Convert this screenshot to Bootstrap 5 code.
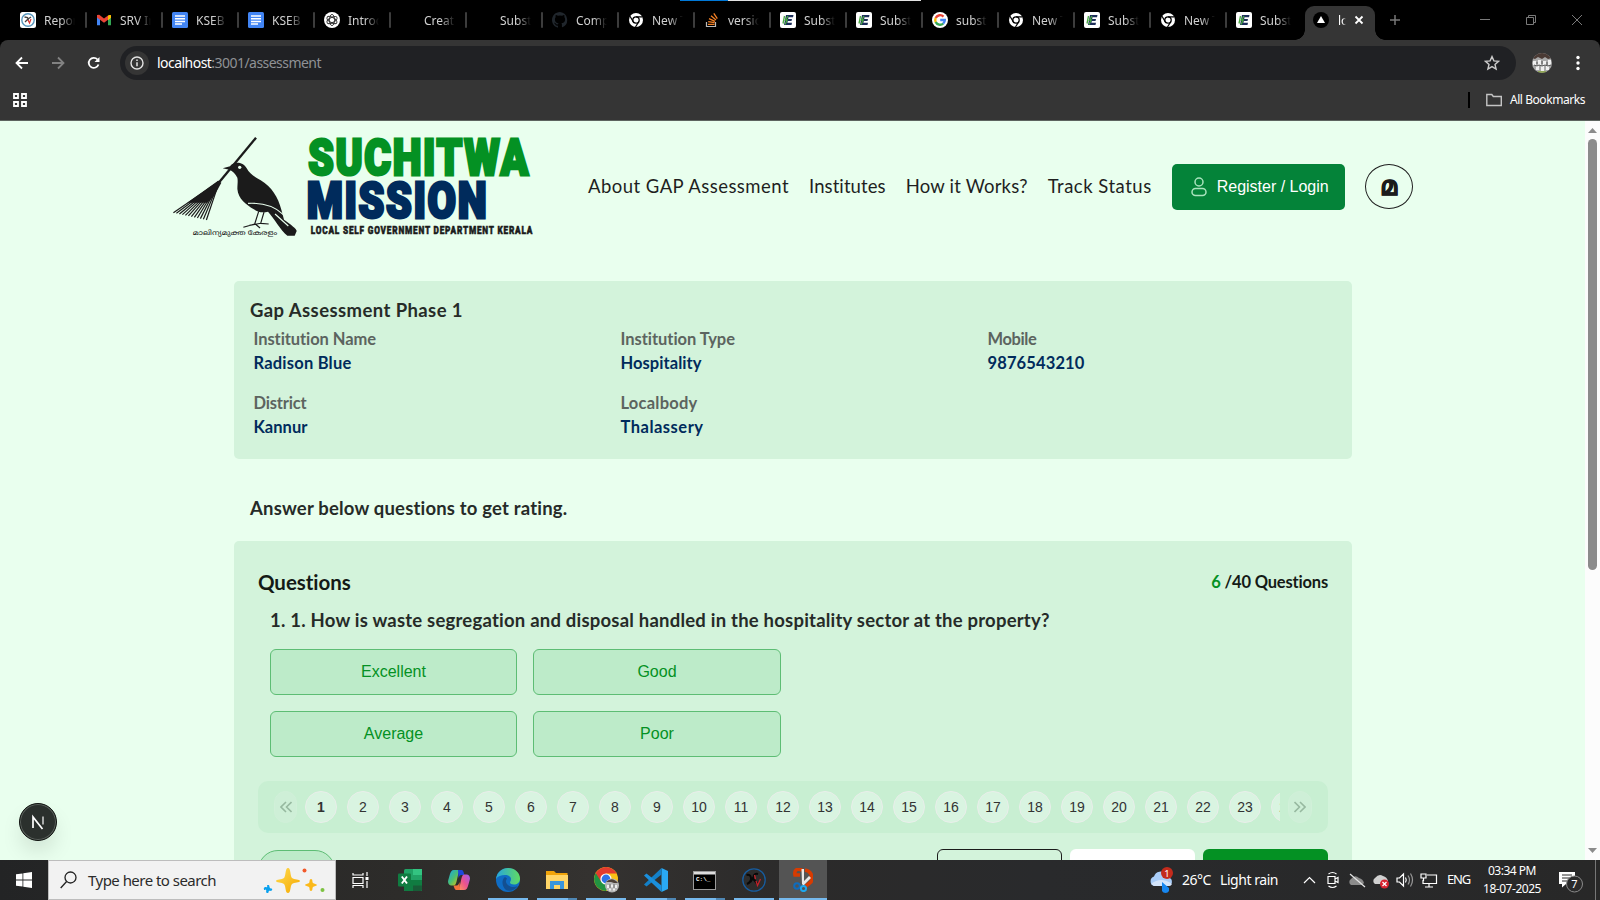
<!DOCTYPE html>
<html lang="en">
<head>
<meta charset="utf-8">
<title>Gap Assessment</title>
<link rel="stylesheet" href="https://cdn.jsdelivr.net/npm/bootstrap@5.3.0/dist/css/bootstrap.min.css">
<style>
html,body{width:1600px;height:900px;overflow:hidden;background:#000}
body{font-family:"Noto Sans","Open Sans",sans-serif;color:#222;line-height:1.2}
svg{display:block;flex:none}
span,div{white-space:nowrap}
.tabstrip{height:40px;background:#000;padding-left:11px;position:relative}
.topline{position:absolute;left:680px;top:0;width:241px;height:1px;background:linear-gradient(90deg,#0078d7 48px,#e3e3e3 48px)}
.btab{width:76px;height:40px;padding-left:9px;flex:none;position:relative}
.btab::after{content:"";width:2px;height:16px;background:#3c3c3c;position:absolute;right:0;top:12px;border-radius:1px}
.btab.nosep::after{display:none}
.btab .fav{width:16px;height:16px;margin-right:8px;flex:none}
.ttl{font:12px/16px "Noto Sans",sans-serif;color:#d0d0d0;width:31px;overflow:hidden;padding-top:1px;-webkit-mask-image:linear-gradient(90deg,#000 55%,transparent)}
.live{width:70px;height:34px;background:#353535;border-radius:9px 9px 0 0;align-self:flex-end;margin-left:2px;padding:0 0 6px 8px;position:relative;flex:none}
.live::before,.live::after{content:"";position:absolute;bottom:0;width:10px;height:10px}
.live::before{left:-10px;background:radial-gradient(circle at 0 0,transparent 9.5px,#353535 10px)}
.live::after{right:-10px;background:radial-gradient(circle at 100% 0,transparent 9.5px,#353535 10px)}
.toolbox{height:81px;background:#353535;border-radius:8px 8px 0 0;border-bottom:1px solid #5d645f}
.addr{height:46px;padding-left:14px}
.omni{width:1396px;height:34px;border-radius:17px;background:#202124;margin-left:18px;padding-left:5px}
.infoc{width:24px;height:24px;border-radius:50%;background:#353535}
.url{font-size:14px;color:#8f9195;margin-left:8px;padding-top:1px}
.marks{height:34px;padding:0 15px 0 13px;font-size:12px;color:#fff}
.pageview{height:739px}
.site{width:1585px;height:739px;overflow:hidden;background:#e9ffee;position:relative;font-family:Lato,sans-serif}
.head{height:131px;padding-left:170px}
.navtxt{font-size:18.5px;line-height:24px;color:#1f1f1f}
.navtxt>span{padding-bottom:1px}
.login{width:173px;height:46px;background:#048339;border-radius:5px;color:#fff;font:16px/44px "Liberation Sans",sans-serif;padding-left:18px}
.lang{width:48px;height:45px;border:1.5px solid #1f1f1f;border-radius:50%;font-weight:700;font-size:27px;line-height:1;padding-bottom:4px;color:#1c1c1c;-webkit-text-stroke:.6px #1c1c1c}
.panel{width:1118px;margin-left:234px;background:#d3f3db;border-radius:5px}
.info{height:178px;margin-top:29px;padding:17px 16px 15px}
.h18{font-size:18.5px;line-height:24px;font-weight:700;color:#262b28}
.fields{display:grid;grid-template-columns:367px 367px 1fr;row-gap:16px;margin:5px 0 0 3.500px;font-weight:700;font-size:16.5px;line-height:24px}
.fields .k{color:#5c645f}.fields .v{color:#002b5c}
.ask{margin:37px 0 21px 250px}
.quiz{height:340px;padding:26px 24px 0 24px}
.qt{font-size:20.5px;line-height:30px;font-weight:700;color:#141a16}
.opts{display:grid;grid-template-columns:247px 248px;gap:16px;margin:17px 0 0 12px}
.opt{height:46px;border:1px solid #5dbd74;border-radius:6px;background:#bdebc9;color:#049123;font:16px/43px "Liberation Sans",sans-serif;text-align:center}
.pager{height:52px;background:#c8efd2;border-radius:10px;margin-top:24px;padding:10px 16px;font:14px/30px "Liberation Sans",sans-serif}
.run{width:975px;overflow:hidden;gap:10px;margin-left:8px}
.num{width:32px;height:32px;flex:none;border-radius:50%;border:1px solid #e9eeea;background:#d9f4e1;color:#333;text-align:center}
.step{height:32px;border-radius:12px;background:#ceefd7;border:1px solid #d1f0d9}
.acts{margin-top:16px;gap:8px}
.acts>div{width:125px;height:46px;border-radius:6px}
.prev{width:77px!important;height:40px!important;border-radius:22px!important;border:1px solid #5dbd74;background:#bdebc9;margin:1px auto 0 0}
.dev{position:absolute;left:19px;top:682px;width:38px;height:38px;border-radius:50%;background:#2b302d;border:1px solid #101310;box-shadow:inset 0 0 0 1px #5b615d,0 12px 24px -6px #0003}
.sbar{width:15px;height:739px;background:#fcfcfc;padding:7px 0}
.thumb{width:9px;height:431px;border-radius:5px;background:#8b8b8b;margin:5px auto 0 3px}
.task{height:40px;background:linear-gradient(90deg,#232425,#2d2c2a 25%,#343230 37%,#2b2a2a 50%,#292a2c 65%,#282828);color:#fff}
.startb{width:48px}
.find{width:288px;height:40px;background:#f2f2f2;border:1px solid #bdbdbd;color:#2b2b2b;font-size:15px;padding:0 10px 0 11px}
.app{height:40px;width:49.2px;position:relative}
.app.on::after{content:"";position:absolute;left:4.5px;bottom:0;width:40px;height:2px;background:#76b9ed}
.app.two::after{background:linear-gradient(90deg,#76b9ed 31px,#4f87b4 31px)}
.app.cur{background:#545454}.app.cur::after{left:0;width:48px}
.tray{font-size:14px;margin-left:auto}
.clock{font-size:12px;line-height:18px;width:62px;text-align:center}
</style>
</head>
<body>
<svg width="0" height="0" class="position-absolute">
<defs>
<symbol id="f-rep" viewBox="0 0 16 16"><rect width="16" height="16" rx="2.5" fill="#fff"/><circle cx="8" cy="8" r="6.2" fill="none" stroke="#5796bd" stroke-width="1.4"/><path d="M4.5 5l3 .5 1 3M5 10l3-3 3-2" stroke="#444" stroke-width="1.3" fill="none"/><path d="M8 8l1.5 3 1.5-4" stroke="#d33" stroke-width="1.2" fill="none"/></symbol>
<symbol id="f-gm" viewBox="0 0 16 16"><path d="M1 4v9.2h3V7z" fill="#4285f4"/><path d="M15 4v9.2h-3V7z" fill="#34a853"/><path d="M12 3.7L15 3v2.6l-3 2.3z" fill="#fbbc04"/><path d="M1 3l2.2-.2L8 6.600 12 3.600V7.800l-4 3-4-3-3-2.300z" fill="#ea4335"/><path d="M12 3.700c1-1 3-1 3 .8v1.200l-3 2.200z" fill="#fbbc04"/></symbol>
<symbol id="f-doc" viewBox="0 0 16 16"><rect width="16" height="16" rx="1.500" fill="#4285f4"/><path d="M3 4h10M3 6.700h10M3 9.400h10M3 12.100h7" stroke="#fff" stroke-width="1.500"/></symbol>
<symbol id="f-gpt" viewBox="0 0 16 16"><circle cx="8" cy="8" r="8" fill="#fff"/><g fill="none" stroke="#333" stroke-width=".9"><ellipse cx="8" cy="8" rx="2.600" ry="5.600"/><ellipse cx="8" cy="8" rx="2.600" ry="5.600" transform="rotate(60 8 8)"/><ellipse cx="8" cy="8" rx="2.600" ry="5.600" transform="rotate(120 8 8)"/></g></symbol>
<symbol id="f-gh" viewBox="0 0 16 16"><path fill="#20262c" d="M8 0C3.580 0 0 3.580 0 8c0 3.540 2.290 6.530 5.470 7.590.4.070.55-.17.55-.38v-1.500c-2 .4-2.500-.6-2.700-1.100-.1-.3-.5-1-.8-1.200-.3-.2-.7-.6 0-.6s1.100.6 1.200.8c.7 1.200 1.900.9 2.300.7.100-.5.300-.9.500-1.100-1.800-.2-3.600-.9-3.600-4 0-.9.300-1.600.8-2.100-.1-.2-.4-1 .1-2.100 0 0 .7-.2 2.200.8a7.600 7.600 0 0 1 4 0c1.500-1 2.200-.8 2.200-.8.4 1.100.2 1.900.1 2.100.5.600.8 1.300.8 2.100 0 3.100-1.900 3.700-3.700 3.900.3.300.5.800.5 1.500v2.200c0 .2.200.5.600.4A8 8 0 0 0 8 0z"/></symbol>
<symbol id="f-cr" viewBox="0 0 16 16"><circle cx="8" cy="8" r="7" fill="#fff"/><circle cx="8" cy="8" r="3.200" fill="none" stroke="#000" stroke-width="1.300"/><path d="M8 4.800h6.500M5.200 9.600L2 4.300M10.800 9.600L7.500 15" stroke="#000" stroke-width="1.200"/></symbol>
<symbol id="f-so" viewBox="0 0 16 16"><path d="M2.500 10v4.500h9V10" fill="none" stroke="#bbb" stroke-width="1.200"/><path d="M4 12.300h6.500M4.200 9.600l6.400 1M5 6.700l6 2.700M7 3.800l5 4.200M9.800 1.300l3.500 5.400" stroke="#f48024" stroke-width="1.300"/></symbol>
<symbol id="f-e" viewBox="0 0 16 16"><rect width="16" height="16" rx="2" fill="#fff"/><path d="M6 3h7.500l-.5 2.200H8.500L8.200 7H12l-.5 2H7.800l-.4 1.800H12l-.5 2.200H4z" fill="#1d2f5a"/><path d="M4.500 4L3 11.500M8 4L5.500 8h1.700L5 12.500" stroke="#49a942" stroke-width="1.300" fill="none"/></symbol>
<symbol id="f-g" viewBox="0 0 16 16"><circle cx="8" cy="8" r="8" fill="#fff"/><g fill="none" stroke-width="2.400"><path d="M11.500 4.600A4.800 4.800 0 0 0 3.700 6" stroke="#ea4335"/><path d="M3.700 5.900a4.800 4.800 0 0 0 0 4.200" stroke="#fbbc04"/><path d="M3.700 10a4.800 4.800 0 0 0 7.500 1.600" stroke="#34a853"/><path d="M11.200 11.600A4.800 4.800 0 0 0 12.800 8H8.200" stroke="#4285f4"/></g></symbol>
</defs>
</svg>

<div class="tabstrip d-flex align-items-center" id="tabs"><div class="topline"></div>
<div class="live d-flex align-items-center"><svg width="16" height="16" viewBox="0 0 16 16"><circle cx="8" cy="8" r="8"/><path d="M8 4l4 7H4z" fill="#fff"/></svg><span class="ttl" style="width:8px;color:#fff;margin-left:9px">lo</span><svg style="margin-left:6px" width="14" height="14" viewBox="0 0 14 14"><path d="M3.500 3.500l7 7m0-7l-7 7" stroke="#fff" stroke-width="1.800"/></svg></div>
<svg style="margin-left:14px" width="12" height="12" viewBox="0 0 12 12"><path d="M6 1v10M1 6h10" stroke="#777" stroke-width="1.500"/></svg>
<svg style="margin-left:78px" width="110" height="14" viewBox="0 0 110 14" fill="none" stroke="#7a7a7a"><path d="M1 6.500h10M47.500 4.500h7v7h-7zM49.500 4.500v-2h7v7h-2M93 2l10 10m0-10L93 12"/></svg>
</div>

<div class="toolbox">
 <div class="addr d-flex align-items-center">
  <svg width="88" height="16" viewBox="0 0 88 16" fill="none" stroke-width="1.800"><path d="M14 8H3M8 2.500L2.500 8 8 13.500" stroke="#fff"/><path d="M38 8h11M44 2.500L49.500 8 44 13.500" stroke="#828282"/><path d="M84.500 9.500A5 5 0 1 1 83.500 4.500" stroke="#fff"/><path d="M85.500 2v5h-5z" fill="#fff"/></svg>
  <div class="omni d-flex align-items-center">
   <div class="infoc d-flex align-items-center justify-content-center"><svg width="14" height="14" viewBox="0 0 14 14"><circle cx="7" cy="7" r="6" fill="none" stroke="#e3e3e3" stroke-width="1.400"/><path d="M7 6.200v4M7 3.500v1.500" stroke="#e3e3e3" stroke-width="1.500"/></svg></div>
   <div class="url" data-w="164"><span class="text-white">localhost</span>:3001/assessment</div>
   <svg class="ms-auto" style="margin-right:16px" width="16" height="16" viewBox="0 0 16 16"><path d="M8 1.600l1.900 4.300 4.600.4-3.500 3.100 1.100 4.600L8 11.600 3.900 14 5 9.400 1.500 6.300l4.600-.4z" fill="none" stroke="#ccc" stroke-width="1.400"/></svg>
  </div>
  <svg style="margin-left:16px" width="20" height="20" viewBox="0 0 20 20"><defs><clipPath id="av"><circle cx="10" cy="10" r="10"/></clipPath></defs><g clip-path="url(#av)"><path d="M0 0h20v20H0z" fill="#a9a9a9"/><path d="M0 0h20v5l-4 1-3-2-3 2-4-2-3 2-3-1z" fill="#4a3a34"/><path d="M1 8h3v4H1zM6 7h3v5H6zM11 8h3v4h-3zM16 7h3v5h-3zM4 13h3v4H4zM9 13h3v5H9zM14 13h3v4h-3z" fill="#efefef"/><path d="M2 12l3 1 2-1 3 1 3-1 3 1 3-1M5 9v2M10 8v3M15 9v3" stroke="#5a5a5a" fill="none"/><path d="M6 19h8" stroke="#8aa63c" stroke-width="1.500"/></g></svg>
  <svg style="margin-left:24px" width="4" height="16" viewBox="0 0 4 16" fill="#fff"><circle cx="2" cy="2.500" r="1.700"/><circle cx="2" cy="8" r="1.700"/><circle cx="2" cy="13.500" r="1.700"/></svg>
 </div>
 <div class="marks d-flex align-items-center" style="padding-bottom:6px">
  <svg width="14" height="14" viewBox="0 0 14 14" fill="none" stroke="#fff" stroke-width="1.800"><path d="M1 1h4v4H1zM9 1h4v4H9zM1 9h4v4H1zM9 9h4v4H9z"/></svg>
  <div class="ms-auto bg-black" style="width:2px;height:16px"></div>
  <svg style="margin-left:16px;margin-right:8px" width="16" height="14" viewBox="0 0 16 14"><path d="M.8 1.500h5l1.500 2h8v9H.8z" fill="none" stroke="#c4c4c4" stroke-width="1.400"/></svg>
  <span data-w="75">All Bookmarks</span>
 </div>
</div>

<div class="pageview d-flex">
 <div class="site">
  <div class="head d-flex align-items-center">
   <svg width="365" height="103.300" viewBox="30 45 1095 310">
    <g stroke="#1b1b1b" fill="none"><path d="M288 53L178 186" stroke-width="7"/><g stroke-width="3.600" id="bristles"></g></g>
    <path d="M174 182l10 6-22 40-20 20-60 0z" fill="#1b1b1b"/>
    <path d="M188 145l22-6c8-14 38-16 50 6 8 16 22 24 42 36 34 20 52 52 62 88l8 30c20 14 38 28 38 34l-6 14-22 0c-20-16-40-52-58-72-16 4-30 2-44-8-20-12-46-30-48-60 0-14 2-24 0-34-6-12-14-20-24-24z" fill="#1b1b1b"/>
    <path d="M264 250c40-2 80 8 106 34 14 16 26 28 38 36M345 282l40 36" stroke="#e9ffee" stroke-width="3.500" fill="none"/><circle cx="239" cy="142" r="5" fill="#e9ffee"/>
    <path d="M296 274l-12 38-34 10m36-10l14 12M312 276l-10 34-34 6m34-6l24 2" fill="none" stroke="#1b1b1b" stroke-width="3.500"/>
    <text x="98" y="344" font-size="22" textLength="254" lengthAdjust="spacingAndGlyphs" fill="#1b1b1b" font-family="Noto Sans,Noto Sans Malayalam,sans-serif">മാലിന്യമുക്ത കേരളം</text>
    <g font-family="Roboto,Liberation Sans,sans-serif" font-weight="900" stroke-linejoin="miter">
    <text x="445" y="164" font-size="152" textLength="665" lengthAdjust="spacingAndGlyphs" fill="#049123" stroke="#049123" stroke-width="9" letter-spacing="6">SUCHITWA</text>
    <text x="440" y="294" font-size="152" textLength="545" lengthAdjust="spacingAndGlyphs" fill="#002b5c" stroke="#002b5c" stroke-width="9" letter-spacing="6">MISSION</text>
    <text x="452" y="341.500" font-size="31" textLength="668" lengthAdjust="spacingAndGlyphs" fill="#1b1b1b" stroke="#1b1b1b" stroke-width="1.500" letter-spacing="3">LOCAL SELF GOVERNMENT DEPARTMENT KERALA</text></g>
   </svg>
   <div class="d-flex align-items-center navtxt" style="margin-left:53px;gap:20px">
    <span data-w="201">About GAP Assessment</span><span data-w="77">Institutes</span><span data-w="122">How it Works?</span><span data-w="104">Track Status</span>
    <div class="login d-flex align-items-center"><svg width="18" height="20" viewBox="0 0 18 20" fill="none" stroke="#a9e3bd" stroke-width="1.500"><circle cx="9" cy="5" r="4"/><rect x="2" y="11.500" width="14" height="7" rx="3.500"/></svg><span style="margin-left:9px" data-w="112">Register / Login</span></div>
    <div class="lang d-flex align-items-center justify-content-center">മ</div>
   </div>
  </div>

  <div class="panel info">
   <div class="h18"><span data-w="213">Gap Assessment Phase 1</span></div>
   <div class="fields">
    <div><div class="k"><span data-w="123">Institution Name</span></div><div class="v"><span data-w="98">Radison Blue</span></div></div>
    <div><div class="k"><span data-w="115">Institution Type</span></div><div class="v"><span data-w="81">Hospitality</span></div></div>
    <div><div class="k"><span data-w="49">Mobile</span></div><div class="v"><span data-w="97">9876543210</span></div></div>
    <div><div class="k"><span data-w="53">District</span></div><div class="v"><span data-w="54">Kannur</span></div></div>
    <div><div class="k"><span data-w="77">Localbody</span></div><div class="v"><span data-w="83">Thalassery</span></div></div>
   </div>
  </div>
  <div class="h18 ask"><span data-w="318">Answer below questions to get rating.</span></div>
  <div class="panel quiz">
   <div class="d-flex align-items-center justify-content-between qt"><span data-w="93">Questions</span><span style="font-size:16.5px" data-w="117"><span style="color:#049123">6</span> /40 Questions</span></div>
   <div class="h18" style="margin:11px 0 0 12px"><span data-w="780">1. 1. How is waste segregation and disposal handled in the hospitality sector at the property?</span></div>
   <div class="opts"><div class="opt">Excellent</div><div class="opt">Good</div><div class="opt">Average</div><div class="opt">Poor</div></div>
   <div class="pager d-flex">
    <div class="step d-flex align-items-center justify-content-center" style="width:23px"><svg width="12" height="12" viewBox="0 0 12 12" fill="none" stroke="#97b9a0" stroke-width="1.600"><path d="M6 1L1 6l5 5M11.500 1l-5 5 5 5"/></svg></div>
    <div class="run d-flex" id="run"></div>
    <div class="step d-flex align-items-center justify-content-center" style="width:24px;margin-left:8px"><svg width="12" height="12" viewBox="0 0 12 12" fill="none" stroke="#97b9a0" stroke-width="1.600"><path d="M.5 1l5 5-5 5M6 1l5 5-5 5"/></svg></div>
   </div>
   <div class="acts d-flex"><div class="prev"></div><div style="border:1px solid #1b1b1b"></div><div class="bg-white"></div><div style="background:#049123"></div></div>
  </div>
  <div class="dev d-flex align-items-center justify-content-center"><svg width="14" height="16" viewBox="0 0 14 16" fill="none" stroke="#fff" stroke-width="1.700"><path d="M2 14V3l9.500 12"/><path d="M12 2.500v8" stroke-opacity=".7"/></svg></div>
 </div>
 <div class="sbar d-flex flex-column">
  <svg class="ms-auto me-auto" width="9" height="5" viewBox="0 0 9 5"><path d="M4.500 0L9 5H0z" fill="#8b8b8b"/></svg>
  <div class="thumb flex-shrink-0" style="margin-top:6px"></div>
  <svg class="mt-auto ms-auto me-auto" width="9" height="5" viewBox="0 0 9 5"><path d="M4.500 5L9 0H0z" fill="#8b8b8b"/></svg>
 </div>
</div>

<div class="task d-flex align-items-center">
 <div class="startb d-flex justify-content-center"><svg width="16" height="16" viewBox="0 0 16 16" fill="#fff"><path d="M0 2.300l6.500-.9v6.200H0zM7.300 1.300L16 0v7.600H7.300zM0 8.400h6.500v6.200L0 13.700zM7.300 8.400H16V16l-8.700-1.200z"/></svg></div>
 <div class="find d-flex align-items-center"><svg width="17" height="18" viewBox="0 0 17 18" fill="none" stroke="#222" stroke-width="1.300"><circle cx="10.500" cy="6.500" r="5.500"/><path d="M6.600 10.500L.7 17"/></svg><span style="margin-left:11px" data-w="128">Type here to search</span>
 <svg class="ms-auto" width="62" height="26" viewBox="0 0 62 26"><defs><linearGradient id="au" x2="1" y2="1"><stop stop-color="#ffdc50"/><stop offset="1" stop-color="#f5a800"/></linearGradient></defs><path d="M25 1c3 0 2 8 4 10s8 1 8 3-6 1-8 3-1 9-4 9-2-7-4-9-8-1-8-3 6-1 8-3 1-10 4-10z" fill="url(#au)"/><path d="M48 12c2 0 1 3 2 4s4 1 4 2-3 1-4 2 0 4-2 4-1-3-2-4-4-1-4-2 3-1 4-2 0-4 2-4z" fill="#fbb91a"/><path d="M5 18c2 0 1 2 2 3s3 0 2 2-2 0-3 1 0 3-2 2 0-2-1-3-3 0-2-2 2 0 3-1-1-2 1-2z" fill="#0aa1ee"/><circle cx="41.500" cy="3.500" r="2" fill="#f2592a"/><circle cx="59.500" cy="23" r="2" fill="#7dc242"/></svg></div>
 <div class="app d-flex align-items-center justify-content-center"><svg style="margin-right:1px" width="17" height="16" viewBox="0 0 17 16" fill="none" stroke="#fff" stroke-width="1.200"><path d="M1 1v2h10V1M1 16v-2.500h10V16M1 5.500h10v6H1zM15 0v4M15 9v7"/><path d="M15 5v3" stroke-width="3"/></svg></div>
 <div class="app d-flex align-items-center justify-content-center"><svg width="24" height="22" viewBox="0 0 24 22"><rect x="6" width="18" height="22" rx="1.500" fill="#21a366"/><path d="M15 0h9v6h-9z" fill="#33c481"/><path d="M6 11h18v10l-1 1H7l-1-1z" fill="#107c41"/><path d="M15 16.500h9V21l-1 1h-8z" fill="#185c37"/><rect y="4.500" width="13" height="13" rx="1" fill="#107c41"/><path d="M3.800 7.500l5.200 7m0-7l-5.200 7" stroke="#fff" stroke-width="1.900"/></svg></div>
 <div class="app d-flex align-items-center justify-content-center"><svg width="22" height="22" viewBox="0 0 22 22"><defs><linearGradient id="c1" y2="1"><stop stop-color="#16a6ea"/><stop offset=".5" stop-color="#4bbf72"/><stop offset="1" stop-color="#f7c400"/></linearGradient><linearGradient id="c2" x1="1" x2="0" y2="1"><stop stop-color="#9b5df5"/><stop offset=".5" stop-color="#ec528d"/><stop offset="1" stop-color="#fd9a5c"/></linearGradient></defs><path d="M12 1H6C3.500 1 2.500 3 1.700 6L.3 11c-1 3.500 1 5.500 3 5.500h2.200c2 0 2.500-2 3.200-4.500L10 6c.6-2 1-3 2-5z" fill="url(#c1)"/><path d="M10 1h3c2.500 0 2.500 2 3.500 5h-3c-2 0-2 1-3 3z" fill="#1b47dc"/><path d="M10 21h6c2.500 0 3.500-2 4.300-5l1.400-5c1-3.500-1-5.500-3-5.500h-2.200c-2 0-2.500 2-3.200 4.500L12 16c-.6 2-1 3-2 5z" fill="url(#c2)"/><path d="M12 21H9c-2.500 0-2.500-2-3.500-4.500h3c2 0 2-1.500 3-3.500z" fill="#f4723c"/></svg></div>
 <div class="app on d-flex align-items-center justify-content-center"><svg width="24" height="24" viewBox="0 0 24 24"><defs><linearGradient id="e1"><stop stop-color="#26a5de"/><stop offset="1" stop-color="#61db61"/></linearGradient></defs><circle cx="12" cy="12" r="12" fill="#0f6cc4"/><path d="M0 11C1 4 6 0 12 0c7 0 12 5 12 10.500 0 4-3 6-6 6-2.500 0-4-1-4-2s1-1.500 1-3.500S13 7 9 7c-4 0-7 1-9 4z" fill="url(#e1)"/><path d="M9 9c-4 3-3 10 1 13 4 2 9 0 12-4-4 2-8 1-10-1-2-1.500-3-4-1-6.500z" fill="#134f91"/></svg></div>
 <div class="app on two d-flex align-items-center justify-content-center"><svg width="22" height="18" viewBox="0 0 22 18"><path d="M0 0h8l2 2h11.500v16H0z" fill="#f0a30a"/><path d="M0 4h22v14H0z" fill="#ffd567"/><path d="M4 18v-8h14v8h-4v-4H8v4z" fill="#3a96dd"/></svg></div>
 <div class="app on d-flex align-items-center justify-content-center"><svg width="26" height="26" viewBox="0 0 26 26"><circle cx="12" cy="12" r="12" fill="#fbc116"/><path d="M12 12L1.700 6A12 12 0 0 0 12 24l4-7z" fill="#229342"/><path d="M12 6.500h10.800L22.400 6A12 12 0 0 0 1.700 6l5 8z" fill="#e33b2e"/><circle cx="12" cy="12" r="5.600" fill="#fff"/><circle cx="12" cy="12" r="4.400" fill="#2f73e8"/><circle cx="18" cy="18.500" r="7" fill="#b5b5b5"/><path d="M12 15q6-6 12 1l-4 0-3-1z" fill="#4c4038"/><path d="M13 18h2v3h-2zM17 17.500h2v3h-2zM21 18h2v3h-2zM15 21.500h2v2h-2zM19 21.500h2v2h-2z" fill="#eee"/><path d="M16 17v4M20 17v4" stroke="#777" fill="none"/></svg></div>
 <div class="app on two d-flex align-items-center justify-content-center"><svg width="24" height="24" viewBox="0 0 24 24"><path d="M17.500 0L24 3v18l-6.500 3z" fill="#2aa9f3"/><path d="M17.500 6.500L2.500 18.500 0 16.500 17.500 0z" fill="#1380c8"/><path d="M17.500 17.500L2.500 5.500 0 7.500 17.500 24z" fill="#1a8fdc"/></svg></div>
 <div class="app on two d-flex align-items-center justify-content-center"><svg width="23" height="19" viewBox="0 0 23 19"><rect x=".5" y=".5" width="22" height="18" fill="#000" stroke="#9b9b9b"/><path d="M1 1h21v2.500H1z" fill="#dedede"/><text x="3" y="10" font-size="6" font-weight="700" fill="#fff" font-family="Liberation Mono,monospace">C:\_</text></svg></div>
 <div class="app on d-flex align-items-center justify-content-center"><svg width="24" height="24" viewBox="0 0 24 24" fill="none"><circle cx="12" cy="12" r="11.200" stroke="#175c9e" stroke-width="1.300"/><path d="M4.500 7q4-1 4.500 3t-4 6M16 6q-4-1-4.500 3l-3 5M10.500 10l5 6" stroke="#080808" stroke-width="2"/><path d="M12.500 7l1 4M14 13l1.500 4.500L18.500 11" stroke="#c3222a" stroke-width="1.300"/></svg></div>
 <div class="app on cur d-flex align-items-center justify-content-center" style="width:48px"><svg width="20" height="24" viewBox="0 0 20 24"><path d="M9 2C4 0 1 2 2 7h5M12 2c6 1 8 6 6 12l-5 4" fill="none" stroke="#d83b01" stroke-width="3.600"/><path d="M8.500 1h2.500v14l-2 1zM16 8l2 2-8 8-1-3z" fill="#e8e8e8"/><circle cx="4" cy="18" r="2.800" fill="none" stroke="#0f6cbd" stroke-width="2"/><circle cx="10.500" cy="20.500" r="2.600" fill="none" stroke="#1ea7ee" stroke-width="2"/></svg></div>
 <div class="tray d-flex align-items-center">
  <svg width="25" height="26" viewBox="0 0 25 26"><path d="M5 19a5 5 0 0 1 0-9.500 7 7 0 0 1 12-2.500l4 4a4.500 4.500 0 0 1-1 8z" fill="#a9cdf8"/><path d="M2 17q10-8 21 0a4 4 0 0 1-3 2H5z" fill="#d4e5fb"/><path d="M13 15l7 6v3q-1 2-3.500 2T13 24z" fill="#1787f0"/><circle cx="18" cy="6" r="6" fill="#c42b1c"/><text x="18" y="9.500" font-size="9.500" fill="#fff" text-anchor="middle">1</text></svg>
  <span style="margin-left:8px" data-w="29">26°C</span><span style="margin-left:9px" data-w="58">Light rain</span>
  <svg style="margin-left:24px" width="136" height="20" viewBox="0 0 136 20" fill="none" stroke="#fff" stroke-width="1.200"><path d="M2 13l5.500-5.500L13 13"/><path d="M26 6.500h7v7h-7zM33 9l3-1.500v5L33 11M26.500 4q4-3 8 0M26.500 16q4 3 8 0"/><path d="M49 15a3.500 3.500 0 0 1 0-6q4-5 8-1 4 1 5 5l-2 2z" fill="#8b8b8b" stroke="none"/><path d="M48 4l15 13" stroke="#e5e5e5"/><path d="M73 14a3.500 3.500 0 0 1 0-6q4-5 8-2 4 1 5 5l-2 3z" fill="#d0d0d0" stroke="none"/><circle cx="82.500" cy="14" r="4.500" fill="#d8232f" stroke="none"/><path d="M80.500 12l4 4m0-4l-4 4"/><path d="M95 8h2.500l4-4v12l-4-4H95zM103.500 7.500q1.500 2.500 0 5"/><path d="M106 5.500q3 4.500 0 9M108.500 3.500q4 6.500 0 13" stroke="#999"/><path d="M125 5h9.500v8.500H121V10M127 13.500V17M123 17h8M119 4h5v4h-5zM121.500 8v3"/></svg>
  <span style="margin-left:9px;font-size:13px" data-w="23">ENG</span>
  <div class="clock" style="margin-left:11px"><span data-w="48">03:34 PM</span><br><span data-w="58">18-07-2025</span></div>
  <svg style="margin-left:16px" width="26" height="26" viewBox="0 0 26 26"><path d="M0 5h16v12H7l-4 3.500V17H0z" fill="#fff"/><path d="M3 8h10M3 11h10M3 14h6" stroke="#2a2a2a"/><circle cx="15.500" cy="17" r="8" fill="#2a2a2a" stroke="#8b8b8b"/><text x="15.500" y="21" font-size="11" fill="#fff" text-anchor="middle">7</text></svg>
  <div style="width:1px;height:40px;background:#777;margin-left:10px;margin-right:4px"></div>
 </div>
</div>

<script src="https://cdn.jsdelivr.net/npm/bootstrap@5.3.0/dist/js/bootstrap.bundle.min.js"></script>
<script>
// browser tabs: [favicon, title]
const tabs=[['rep','Report'],['gm','SRV In'],['doc','KSEB'],['doc','KSEB'],['gpt','Introd'],['','Create'],['','Subst'],['gh','Comp'],['cr','New T'],['so','version'],['e','Subst'],['e','Subst'],['g','substa'],['cr','New T'],['e','Subst'],['cr','New T'],['e','Subst']];
document.querySelector('.live').insertAdjacentHTML('beforebegin',tabs.map(([f,t],i)=>`<div class="btab d-flex align-items-center${i==16?' nosep':''}"><svg class="fav">${f?`<use href="#f-${f}"/>`:''}</svg><div class="ttl">${t}</div></div>`).join(''));
// question numbers
document.getElementById('run').innerHTML=Array.from({length:24},(_,i)=>`<div class="num${i?'':' fw-bold'}">${i+1}</div>`).join('');
// broom bristles
document.getElementById('bristles').innerHTML=Array.from({length:12},(_,i)=>`<path d="M178 184L${40+i*9} ${278+i*2}"/>`).join('');
// track each label to its design width
document.querySelectorAll('[data-w]').forEach(e=>{e.style.display='inline-block';const n=e.textContent.length;e.style.letterSpacing=((e.dataset.w-e.getBoundingClientRect().width)/n).toFixed(3)+'px'});
</script>
</body>
</html>
